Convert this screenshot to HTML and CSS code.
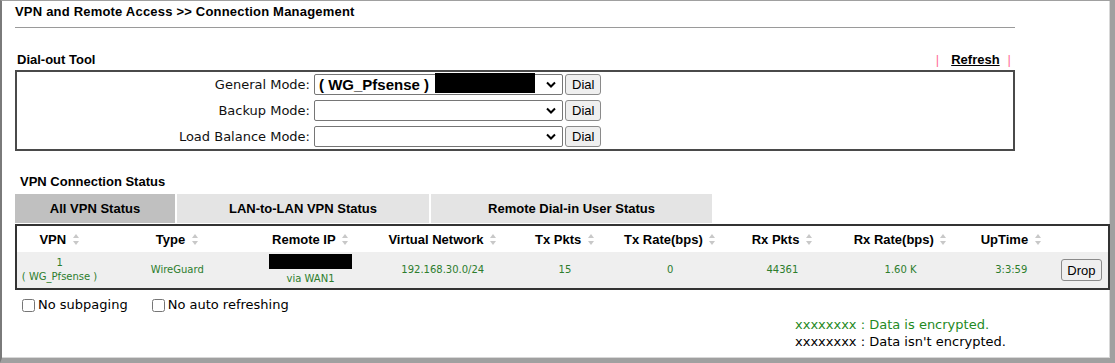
FILE: index.html
```html
<!DOCTYPE html>
<html lang="en">

<head>
  <meta charset="UTF-8" />
  <title>Connection Management</title>
  <link rel="stylesheet" href="styles.css">
</head>

<body>
  <div class="window">
    <div class="page">
      <div class="title">VPN and Remote Access &gt;&gt; Connection Management</div>

      <div class="section-head">
        <span class="section-name">Dial-out Tool</span>
        <span class="refresh"><span class="bar">|</span><a href="#">Refresh</a><span class="bar">|</span></span>
      </div>

      <div class="dial-box">
        <div class="dial-row">
          <label class="dial-label">General Mode:</label>
          <div class="select">
            <span class="select-text">( WG_Pfsense )</span>
            <span class="mask mask-select"></span>
            <svg class="chevron" width="10" height="7" viewBox="0 0 10 7"><polyline points="1,1.5 5,5.5 9,1.5" fill="none" stroke="#000" stroke-width="2"/></svg>
          </div>
          <button class="btn">Dial</button>
        </div>
        <div class="dial-row">
          <label class="dial-label">Backup Mode:</label>
          <div class="select">
            <svg class="chevron" width="10" height="7" viewBox="0 0 10 7"><polyline points="1,1.5 5,5.5 9,1.5" fill="none" stroke="#000" stroke-width="2"/></svg>
          </div>
          <button class="btn">Dial</button>
        </div>
        <div class="dial-row">
          <label class="dial-label">Load Balance Mode:</label>
          <div class="select">
            <svg class="chevron" width="10" height="7" viewBox="0 0 10 7"><polyline points="1,1.5 5,5.5 9,1.5" fill="none" stroke="#000" stroke-width="2"/></svg>
          </div>
          <button class="btn">Dial</button>
        </div>
      </div>

      <div class="status-title">VPN Connection Status</div>

      <div class="tabs">
        <div class="tab tab-active tab-all">All VPN Status</div>
        <div class="tab tab-lan">LAN-to-LAN VPN Status</div>
        <div class="tab tab-remote">Remote Dial-in User Status</div>
      </div>

      <table class="vpn-table">
        <colgroup>
          <col class="c-vpn"><col class="c-type"><col class="c-ip"><col class="c-net"><col class="c-txp">
          <col class="c-txr"><col class="c-rxp"><col class="c-rxr"><col class="c-up"><col class="c-drop">
        </colgroup>
        <thead>
          <tr>
            <th>VPN <span class="sort"></span></th>
            <th>Type <span class="sort"></span></th>
            <th>Remote IP <span class="sort"></span></th>
            <th>Virtual Network <span class="sort"></span></th>
            <th>Tx Pkts <span class="sort"></span></th>
            <th>Tx Rate(bps) <span class="sort"></span></th>
            <th>Rx Pkts <span class="sort"></span></th>
            <th>Rx Rate(bps) <span class="sort"></span></th>
            <th>UpTime <span class="sort"></span></th>
            <th></th>
          </tr>
        </thead>
        <tbody>
          <tr>
            <td>1<br>( WG_Pfsense )</td>
            <td>WireGuard</td>
            <td><span class="mask mask-ip"></span>via WAN1</td>
            <td>192.168.30.0/24</td>
            <td>15</td>
            <td>0</td>
            <td>44361</td>
            <td>1.60 K</td>
            <td>3:3:59</td>
            <td><button class="btn btn-drop">Drop</button></td>
          </tr>
        </tbody>
      </table>

      <div class="options">
        <label class="opt"><input type="checkbox">No subpaging</label>
        <label class="opt"><input type="checkbox">No auto refreshing</label>
      </div>

      <div class="legend">
        <div class="enc">xxxxxxxx : Data is encrypted.</div>
        <div>xxxxxxxx : Data isn't encrypted.</div>
      </div>
    </div>
  </div>
</body>

</html>
```

FILE: styles.css
```css
body {
  margin: 0;
  font-family: "Liberation Sans", Arial, sans-serif;
  color: #000;
  background: #fff;
}

.window {
  box-sizing: border-box;
  width: 1115px;
  height: 363px;
  border-top: 1px solid #a0a0a0;
  border-left: 2px solid #7a7a7a;
  border-right: 5px solid #a0a0a0;
  border-bottom: 5px solid #a0a0a0;
  box-shadow: inset -1px -1px 0 #d8d8d8;
  overflow: hidden;
}

.page {
  padding-left: 13px;
}

.title {
  width: 1000px;
  font-size: 13px;
  font-weight: bold;
  letter-spacing: 0.2px;
  line-height: 15px;
  padding: 3px 0 8px;
  border-bottom: 1px solid #9a9a9a;
}

.section-head {
  width: 1000px;
  display: flex;
  justify-content: space-between;
  margin: 24px 0 2px;
  height: 16px;
  line-height: 16px;
  font-size: 13px;
  font-weight: bold;
}

.section-name {
  padding-left: 2px;
}

.refresh {
  padding-right: 4px;
}

.refresh .bar {
  color: #ff6f9a;
  font-weight: normal;
}

.refresh a {
  color: #000;
  text-decoration: underline;
  margin: 0 8px 0 12px;
}

.dial-box {
  box-sizing: border-box;
  width: 1000px;
  border: 2px solid #4a4a4a;
  padding: 2px 0;
  display: flex;
  flex-direction: column;
  gap: 5px;
}

.dial-row {
  display: flex;
  align-items: center;
  height: 21px;
}

.dial-label {
  width: 293px;
  margin-right: 4px;
  text-align: right;
  font-family: "DejaVu Sans", Verdana, sans-serif;
  font-size: 13px;
  color: #111;
}

.select {
  box-sizing: border-box;
  width: 249px;
  height: 21px;
  border: 1px solid #767676;
  border-radius: 2px;
  display: flex;
  align-items: center;
  padding-left: 4px;
  position: relative;
}

.select-text {
  font-size: 15px;
  font-weight: bold;
}

.chevron {
  position: absolute;
  right: 6px;
  top: 6px;
}

.mask {
  display: inline-block;
  background: #000;
}

.mask-select {
  width: 100px;
  height: 20px;
  margin: -3px 0 0 6px;
}

.btn {
  box-sizing: border-box;
  font-family: "Liberation Sans", Arial, sans-serif;
  font-size: 13px;
  height: 21px;
  padding: 0 6px;
  margin-left: 2px;
  background: #efefef;
  border: 1px solid #8a8a8a;
  border-radius: 3px;
  color: #000;
}

.status-title {
  margin: 23px 0 4px;
  padding-left: 5px;
  font-size: 13px;
  font-weight: bold;
  line-height: 16px;
}

.tabs {
  display: flex;
  gap: 2px;
  height: 29px;
  line-height: 29px;
  font-size: 13px;
  font-weight: bold;
  text-align: center;
}

.tab {
  background: #e4e4e4;
}

.tab-active {
  background: #c0c0c0;
}

.tab-all {
  width: 160px;
}

.tab-lan {
  width: 252px;
}

.tab-remote {
  width: 281px;
}

.vpn-table {
  box-sizing: border-box;
  width: 1095px;
  margin-top: 1px;
  border: 2px solid #333;
  border-collapse: collapse;
  table-layout: fixed;
}

.c-vpn { width: 86px; }
.c-type { width: 150px; }
.c-ip { width: 116px; }
.c-net { width: 148px; }
.c-txp { width: 96px; }
.c-txr { width: 114px; }
.c-rxp { width: 110px; }
.c-rxr { width: 126px; }
.c-up { width: 95px; }
.c-drop { width: 50px; }

.vpn-table th {
  height: 26px;
  padding: 0;
  font-size: 13px;
  font-weight: bold;
  white-space: nowrap;
}

.sort {
  display: inline-block;
  width: 7px;
  height: 11px;
  margin-left: 3px;
  vertical-align: -1px;
  position: relative;
}

.sort::before,
.sort::after {
  content: "";
  position: absolute;
  left: 0;
  border-left: 3.5px solid transparent;
  border-right: 3.5px solid transparent;
}

.sort::before {
  top: 0;
  border-bottom: 4px solid #c8c8c8;
}

.sort::after {
  bottom: 0;
  border-top: 4px solid #c8c8c8;
}

.vpn-table td {
  height: 36px;
  padding: 0;
  background: #efefef;
  text-align: center;
  font-family: "DejaVu Sans", Verdana, sans-serif;
  font-size: 10px;
  line-height: 14px;
  color: #2d7d2d;
}

.mask-ip {
  display: block;
  width: 83px;
  height: 15px;
  margin: 0 auto 3px;
}

.btn-drop {
  height: 22px;
  padding: 0 5px;
  margin: 0 4px 0 0;
}

.options {
  display: flex;
  gap: 24px;
  margin-top: 7px;
  padding-left: 7px;
  font-family: "DejaVu Sans", Verdana, sans-serif;
  font-size: 13px;
  line-height: 16px;
}

.opt {
  display: flex;
  align-items: center;
}

.opt input {
  width: 13px;
  height: 13px;
  margin: 0 3px 0 0;
}

.legend {
  margin-top: 3px;
  padding-left: 780px;
  font-family: "DejaVu Sans", Verdana, sans-serif;
  font-size: 13px;
  line-height: 17px;
}

.enc {
  color: #1f8a1f;
}
```
